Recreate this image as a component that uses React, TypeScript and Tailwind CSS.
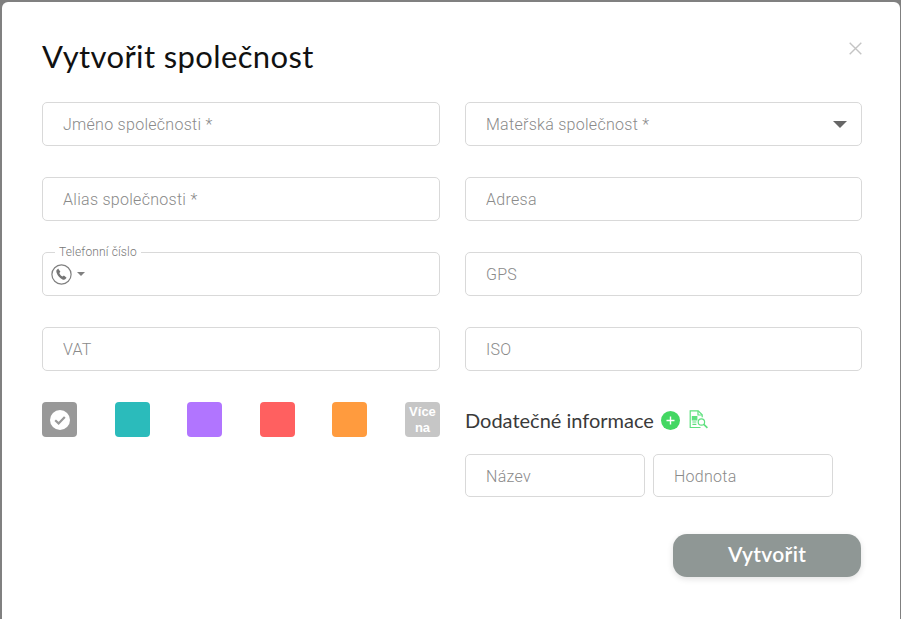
const fieldText = "font-['Roboto',sans-serif] text-[16px] font-light tracking-[0.28px]";
const inputClass = `h-[44px] w-full rounded-[5px] border border-[#d9d9d9] bg-white px-[20px] ${fieldText} text-[#333] outline-none placeholder:text-[#8a8a8a]`;
const smallInputClass = `h-[43px] w-[180px] rounded-[5px] border border-[#d9d9d9] px-[20px] pt-[1px] ${fieldText} outline-none placeholder:text-[#8a8a8a]`;

function TextField({ placeholder }: { placeholder: string }) {
  return <input className={inputClass} placeholder={placeholder} />;
}

function SelectField({ placeholder }: { placeholder: string }) {
  return (
    <div className={`flex h-[44px] items-center justify-between rounded-[5px] border border-[#d9d9d9] bg-white pl-[20px] pr-[14px] pt-[1px] ${fieldText} text-[#8a8a8a]`}>
      <span>{placeholder}</span>
      <span className="h-0 w-0 border-x-[7px] border-t-[7px] border-x-transparent border-t-[#666]" />
    </div>
  );
}

function PhoneField() {
  return (
    <div className="relative flex h-[44px] items-center gap-[5px] rounded-[5px] border border-[#d9d9d9] bg-white pl-[8px]">
      <span className="absolute left-[12px] top-[-8px] bg-white px-[4px] font-['Roboto',sans-serif] text-[12px] font-light leading-[14px] tracking-[0.15px] text-[#777]">
        Telefonní číslo
      </span>
      <svg width="21" height="21" viewBox="0 0 21 21" fill="none">
        <circle cx="10.5" cy="10.5" r="9.6" stroke="#808080" strokeWidth="1.2" />
        <path
          d="M7.4 4.6 5.9 5.8c-.7.6-.7 1.8-.2 3.2.9 2.8 3.2 5.3 5.8 6.4 1.3.5 2.4.3 3-.4l1.1-1.2-2.7-2.2-1.3 1c-1.4-.6-2.8-2.1-3.3-3.6l1.1-1.2-2-2.8Z"
          fill="#757575"
        />
      </svg>
      <span className="h-0 w-0 border-x-[4px] border-t-[4px] border-x-transparent border-t-[#808080]" />
    </div>
  );
}

function Swatches() {
  return (
    <div className="flex justify-between">
      <div className="flex h-[35px] w-[35px] items-center justify-center rounded-[4px] bg-[#999999]">
        <svg width="20" height="20" viewBox="0 0 20 20">
          <circle cx="10" cy="10" r="10" fill="#fff" />
          <path d="M5.2 10.2 8.6 13.4 14.8 7" fill="none" stroke="#999" strokeWidth="2.2" />
        </svg>
      </div>
      <div className="h-[35px] w-[35px] rounded-[4px] bg-[#2bbbbb]" />
      <div className="h-[35px] w-[35px] rounded-[4px] bg-[#b175ff]" />
      <div className="h-[35px] w-[35px] rounded-[4px] bg-[#ff6060]" />
      <div className="h-[35px] w-[35px] rounded-[4px] bg-[#ff9b3e]" />
      <div className="flex h-[35px] w-[35px] items-center justify-center rounded-[4px] bg-[#c6c6c6] text-center font-['Liberation_Sans',sans-serif] text-[13px] font-bold leading-[16px] text-white">
        Více na
      </div>
    </div>
  );
}

function AddIcon() {
  return (
    <svg width="19" height="19" viewBox="0 0 19 19">
      <circle cx="9.5" cy="9.5" r="9.5" fill="#43d762" />
      <path d="M9.5 5.5v8M5.5 9.5h8" stroke="#fff" strokeWidth="1.4" />
    </svg>
  );
}

function DocSearchIcon() {
  return (
    <svg width="19" height="20" viewBox="0 0 19 20" fill="none" stroke="#5fe07f" strokeWidth="1.2">
      <path d="M11.5 17.5H1.2V.8h8l4 4v2.4" />
      <path d="M9 1v4h4" />
      <path d="M3.4 6.6h4.4v3.2H3.4Z" fill="#5fe07f" />
      <path d="M3.4 12h4M3.4 14.4h4" />
      <circle cx="12.4" cy="12" r="3.2" />
      <path d="m14.8 14.4 3.6 3.4" strokeWidth="1.6" />
    </svg>
  );
}

function CloseIcon() {
  return (
    <svg width="13" height="13" viewBox="0 0 13 13" stroke="#c4c4c4" strokeWidth="1.4">
      <path d="M.7.7l11.6 11.6M12.3.7.7 12.3" />
    </svg>
  );
}

export default function App() {
  return (
    <div className="h-[619px] w-[901px] overflow-hidden bg-[#808080] pl-[2px] pr-[1px] pt-[2px]">
      <div className="relative h-[640px] rounded-[6px] bg-white pl-[40px] pr-[38px] pt-[33px]">
        <button className="absolute right-[38px] top-[40px]">
          <CloseIcon />
        </button>
        <h1 className="font-['Lato',sans-serif] text-[31px] font-normal leading-[42px] tracking-[0.38px] text-[#111]">
          Vytvořit společnost
        </h1>
        <div className="mt-[25px] grid grid-cols-[398px_397px] gap-x-[25px] gap-y-[31px]">
          <TextField placeholder="Jméno společnosti *" />
          <SelectField placeholder="Mateřská společnost *" />
          <TextField placeholder="Alias společnosti *" />
          <TextField placeholder="Adresa" />
          <PhoneField />
          <TextField placeholder="GPS" />
          <TextField placeholder="VAT" />
          <TextField placeholder="ISO" />
          <Swatches />
          <div>
            <div className="flex h-[36px] items-center">
              <span className="font-['Lato',sans-serif] text-[20px] text-[#3a3a3a]">Dodatečné informace</span>
              <span className="ml-[7px]"><AddIcon /></span>
              <span className="ml-[9px]"><DocSearchIcon /></span>
            </div>
            <div className="mt-[16px] flex gap-[8px]">
              <input className={smallInputClass} placeholder="Název" />
              <input className={smallInputClass} placeholder="Hodnota" />
            </div>
            <div className="mr-[1px] mt-[37px] flex justify-end">
              <button className="h-[43px] w-[188px] rounded-[14px] bg-[#8f9795] pb-[3px] font-['Lato',sans-serif] text-[21px] font-semibold tracking-[0.3px] text-white shadow-[0_2px_6px_rgba(0,0,0,0.12)]">
                Vytvořit
              </button>
            </div>
          </div>
        </div>
      </div>
    </div>
  );
}
